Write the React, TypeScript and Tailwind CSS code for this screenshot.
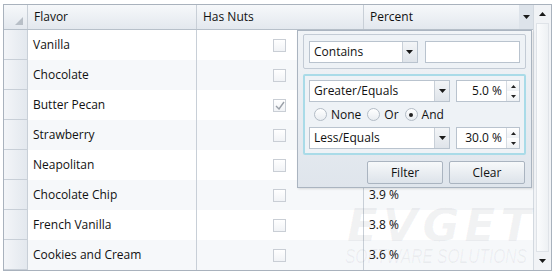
import React from "react";

type Row = { flavor: string; nuts: boolean; pct: string };

// percent values of the first rows sit under the filter popup
const rows: Row[] = [
  { flavor: "Vanilla", nuts: false, pct: "" },
  { flavor: "Chocolate", nuts: false, pct: "" },
  { flavor: "Butter Pecan", nuts: true, pct: "" },
  { flavor: "Strawberry", nuts: false, pct: "" },
  { flavor: "Neapolitan", nuts: false, pct: "" },
  { flavor: "Chocolate Chip", nuts: false, pct: "3.9 %" },
  { flavor: "French Vanilla", nuts: false, pct: "3.8 %" },
  { flavor: "Cookies and Cream", nuts: false, pct: "3.6 %" },
];

const Tri = ({ up = false }: { up?: boolean }) => (
  <svg width="7" height="4" viewBox="0 0 7 4">
    <path d={up ? "M0 4 L3.5 0 L7 4 Z" : "M0 0 L7 0 L3.5 4 Z"} fill="#1a1a1a" />
  </svg>
);

const Check = ({ checked }: { checked: boolean }) => (
  <div className="w-[13px] h-[13px] border border-[#c9ced5] bg-gradient-to-b from-white to-[#f1f3f6] flex items-center justify-center">
    {checked && (
      <svg width="10" height="9" viewBox="0 0 10 9">
        <path d="M1 5 L4 8 L9 1" fill="none" stroke="#9aa0a8" strokeWidth="1.4" />
      </svg>
    )}
  </div>
);

const Combo = ({ text, w }: { text: string; w: string }) => (
  <div className={`${w} h-[22px] flex bg-white border border-[#b9c3ce]`}>
    <div className="flex-1 pl-[4px] flex items-center text-[12px] text-[#111]">{text}</div>
    <div className="w-[15px] border-l border-[#c9d0d8] bg-gradient-to-b from-[#f3f5f7] to-[#dfe4ea] flex items-center justify-center">
      <Tri />
    </div>
  </div>
);

const Spinner = ({ text }: { text: string }) => (
  <div className="w-[64px] h-[22px] flex bg-white border border-[#b9c3ce]">
    <div className="flex-1 pr-[4px] flex items-center justify-end text-[12px] text-[#111]">{text}</div>
    <div className="w-[13px] border-l border-[#d5dbe2] flex flex-col">
      <div className="flex-1 flex items-center justify-center bg-gradient-to-b from-white to-[#eef1f4]">
        <svg width="5" height="3" viewBox="0 0 5 3"><path d="M0 3 L2.5 0 L5 3 Z" fill="#222" /></svg>
      </div>
      <div className="flex-1 flex items-center justify-center bg-gradient-to-b from-white to-[#eef1f4]">
        <svg width="5" height="3" viewBox="0 0 5 3"><path d="M0 0 L5 0 L2.5 3 Z" fill="#222" /></svg>
      </div>
    </div>
  </div>
);

const Radio = ({ label, on = false }: { label: string; on?: boolean }) => (
  <div className="flex items-center gap-[4px]">
    <div className="w-[13px] h-[13px] rounded-full border border-[#b3bcc6] bg-gradient-to-b from-white to-[#e9edf1] flex items-center justify-center">
      {on && <div className="w-[4px] h-[4px] rounded-full bg-[#222]" />}
    </div>
    <span className="text-[12px] text-[#111]">{label}</span>
  </div>
);

const FilterPopup = () => (
  <div className="absolute left-[293px] top-[25px] w-[235px] h-[158px] border border-[#aab4c0] bg-gradient-to-b from-[#f1f4f7] to-[#dfe5ec] shadow-[1px_1px_2px_rgba(0,0,0,0.12)] px-[5px] pt-[3px]">
    <div className="h-[35px] border border-[#c3cbd5] rounded-[2px] bg-[#eef2f6] flex items-center gap-[7px] px-[5px]">
      <Combo text="Contains" w="w-[110px]" />
      <div className="w-[96px] h-[22px] bg-white border border-[#b9c3ce]" />
    </div>
    <div className="mt-[5px] h-[81px] border-2 border-[#a9dbe8] rounded-[2px] bg-[#eef2f6] px-[4px] pt-[4px]">
      <div className="flex items-center gap-[6px]">
        <Combo text="Greater/Equals" w="w-[142px]" />
        <Spinner text="5.0 %" />
      </div>
      <div className="h-[25px] flex items-center gap-[6px] pl-[5px]">
        <Radio label="None" />
        <Radio label="Or" />
        <Radio label="And" on />
      </div>
      <div className="flex items-center gap-[6px]">
        <Combo text="Less/Equals" w="w-[142px]" />
        <Spinner text="30.0 %" />
      </div>
    </div>
    <div className="mt-[6px] flex justify-end gap-[6px] pr-[1px]">
      <div className="w-[76px] h-[23px] border border-[#aab4c0] rounded-[2px] bg-gradient-to-b from-[#f7f9fa] to-[#dde3ea] flex items-center justify-center text-[12px] text-[#111]">Filter</div>
      <div className="w-[76px] h-[23px] border border-[#aab4c0] rounded-[2px] bg-gradient-to-b from-[#f7f9fa] to-[#dde3ea] flex items-center justify-center text-[12px] text-[#111]">Clear</div>
    </div>
  </div>
);

export default function App() {
  return (
    <div className="w-[554px] h-[276px] bg-white pt-[4px] pl-[3px] font-['Open_Sans',sans-serif] text-[12px] text-[#111]">
      <div className="relative w-[549px] h-[267px] border border-[#a9b2bd] flex overflow-hidden">
        <div className="w-[529px] flex flex-col">
          {/* header */}
          <div className="h-[25px] flex border-b border-[#b7c0ca] bg-gradient-to-b from-[#f6f8fa] to-[#e3e8ee]">
            <div className="w-[24px] border-r border-[#c8cfd7] relative">
              <svg className="absolute right-[4px] bottom-[4px]" width="8" height="8" viewBox="0 0 8 8">
                <path d="M8 0 L8 8 L0 8 Z" fill="#b8bfc7" />
              </svg>
            </div>
            <div className="w-[169px] border-r border-[#c8cfd7] pl-[6px] flex items-center">Flavor</div>
            <div className="w-[167px] border-r border-[#c8cfd7] pl-[6px] flex items-center">Has Nuts</div>
            <div className="flex-1 pl-[6px] flex items-center justify-between">
              <span>Percent</span>
              <div className="w-[14px] h-full flex items-center justify-center bg-[#dde3ea]">
                <Tri />
              </div>
            </div>
          </div>
          {/* rows */}
          {rows.map((r, i) => (
            <div key={r.flavor} className={`h-[30px] flex ${i % 2 ? "bg-[#f6f8fa]" : "bg-white"}`}>
              <div className="w-[24px] border-r border-b border-[#c8cfd7] bg-gradient-to-r from-[#f3f5f8] to-[#e3e8ee]" />
              <div className="w-[169px] border-r border-[#c8cfd7] pl-[5px] flex items-center">{r.flavor}</div>
              <div className="w-[167px] border-r border-[#c8cfd7] flex items-center justify-end pr-[77px]">
                <Check checked={r.nuts} />
              </div>
              <div className="flex-1 pl-[5px] flex items-center">{r.pct}</div>
            </div>
          ))}
        </div>
        {/* scrollbar */}
        <div className="flex-1 border-l border-[#d3d9e0] bg-[#f1f3f6] flex flex-col">
          <div className="h-[18px] flex items-center justify-center">
            <Tri up />
          </div>
          <div className="flex-1 mx-[2px] border border-[#dfe3e8] bg-gradient-to-r from-[#fbfcfd] to-[#eef1f4]" />
          <div className="h-[18px] flex items-center justify-center">
            <Tri />
          </div>
        </div>
        {/* watermark */}
        <span className="absolute left-[343px] top-[198px] pointer-events-none select-none whitespace-nowrap text-[rgba(40,50,70,0.06)] italic font-bold text-[45px] leading-none tracking-[5px] font-['DejaVu_Sans',sans-serif]">
          EVGET
        </span>
        <span className="absolute left-[341px] top-[240px] pointer-events-none select-none whitespace-nowrap origin-left scale-x-[0.74] text-[rgba(40,50,70,0.06)] italic text-[21px] leading-none font-['Liberation_Sans',sans-serif]">
          SOFTWARE SOLUTIONS
        </span>
        <FilterPopup />
      </div>
    </div>
  );
}
